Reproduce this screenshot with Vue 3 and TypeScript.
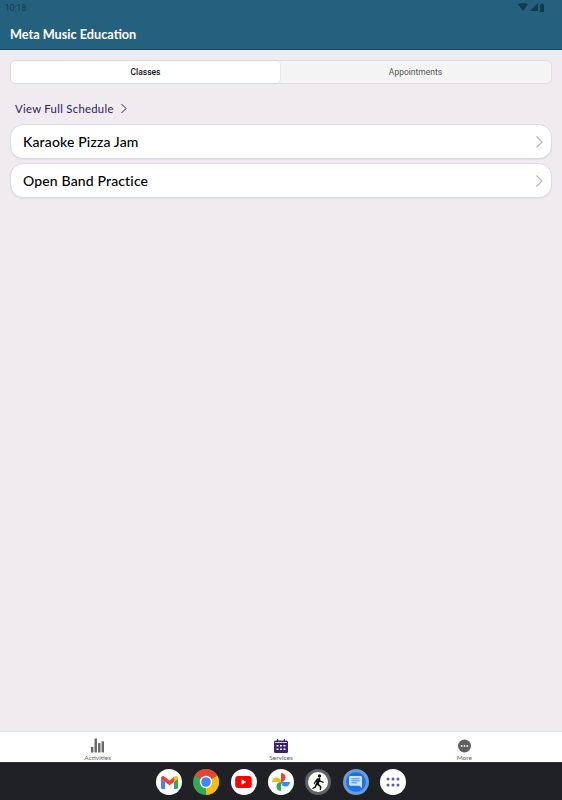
<template>
  <div class="screen">
    <header class="top">
      <div class="status">
        <span class="time">10:18</span>
        <div class="status-icons">
          <svg width="10" height="8" viewBox="0 0 10 8"><path d="M0 1.200C3 -.4 7 -.4 10 1.200L5 8Z" fill="#16394d" /></svg>
          <svg width="8" height="8" viewBox="0 0 8 8"><path d="M8 0V8H0Z" fill="#16394d" /></svg>
          <svg width="6" height="9" viewBox="0 0 6 9"><path d="M1 1.500h1V.5h2v1h1v7.500H1Z" fill="#16394d" /></svg>
        </div>
      </div>
      <h1 class="title">Meta Music Education</h1>
    </header>

    <main class="content">
      <div class="segment">
        <button
          v-for="tab in tabs"
          :key="tab"
          class="segment-btn"
          :class="{ active: tab === activeTab }"
          @click="activeTab = tab"
        >
          {{ tab }}
        </button>
      </div>

      <a class="schedule-link">
        View Full Schedule
        <svg width="8" height="11" viewBox="0 0 8 11"><path d="M1.500 1l4.500 4.500L1.500 10" fill="none" stroke="#2b1a5e" stroke-width="1" /></svg>
      </a>

      <div class="list">
        <div v-for="item in classes" :key="item" class="card">
          <span>{{ item }}</span>
          <svg width="9" height="14" viewBox="0 0 9 14"><path d="M1.500 1.500L7 7l-5.500 5.500" fill="none" stroke="#b5b5b8" stroke-width="1.200" /></svg>
        </div>
      </div>
    </main>

    <nav class="tabbar">
      <div class="tabbar-item">
        <svg width="13" height="15" viewBox="0 0 14 15" fill="#666">
          <rect x="0" y="9" width="2.600" height="6" />
          <rect x="3.800" y="0" width="2.600" height="15" />
          <rect x="7.600" y="5" width="2.600" height="10" />
          <rect x="11.400" y="3" width="2.600" height="12" />
        </svg>
        <span>Activities</span>
      </div>
      <div class="tabbar-item selected">
        <svg width="14" height="14" viewBox="0 0 14 14">
          <rect x="0" y="1.500" width="14" height="12.500" rx="1.500" fill="#3b2270" />
          <rect x="3" y="0" width="1.200" height="3" fill="#3b2270" />
          <rect x="9.800" y="0" width="1.200" height="3" fill="#3b2270" />
          <rect x="1" y="3" width="12" height="1" fill="#cfc8e0" />
          <g fill="#fff">
            <rect x="2.500" y="6" width="2" height="1.500" />
            <rect x="6" y="6" width="2" height="1.500" />
            <rect x="9.500" y="6" width="2" height="1.500" />
            <rect x="2.500" y="9.500" width="2" height="1.500" />
            <rect x="6" y="9.500" width="2" height="1.500" />
            <rect x="9.500" y="9.500" width="2" height="1.500" />
          </g>
        </svg>
        <span>Services</span>
      </div>
      <div class="tabbar-item">
        <svg width="13" height="14" viewBox="0 0 13 13">
          <circle cx="6.500" cy="6.500" r="6.500" fill="#5f5f62" />
          <circle cx="3.700" cy="6.500" r="1" fill="#e8e8e8" />
          <circle cx="6.500" cy="6.500" r="1" fill="#e8e8e8" />
          <circle cx="9.300" cy="6.500" r="1" fill="#e8e8e8" />
        </svg>
        <span>More</span>
      </div>
    </nav>

    <footer class="dock">
      <div class="app white">
        <svg width="17" height="13" viewBox="0 0 17 13">
          <path d="M0 2v9.500A1.500 1.500 0 0 0 1.500 13H4V6Z" fill="#4285f4" />
          <path d="M17 2v9.500a1.500 1.500 0 0 1-1.500 1.500H13V6Z" fill="#34a853" />
          <path d="M0 2C0 .3 2 -.6 3.300 .4L8.500 4.500 13 1v5L8.500 9.300 4 6 0 3Z" fill="#ea4335" />
          <path d="M13 1l.700-.6C15 -.6 17 .3 17 2v1l-4 3Z" fill="#fbbc04" />
        </svg>
      </div>
      <div class="app">
        <svg width="26" height="26" viewBox="0 0 26 26">
          <circle cx="13" cy="13" r="13" fill="#34a853" />
          <path d="M13 13L24.260 6.500A13 13 0 0 1 13 26Z" fill="#fbbc04" />
          <path d="M13 13L1.740 6.500A13 13 0 0 1 24.260 6.500Z" fill="#ea4335" />
          <circle cx="13" cy="13" r="6.200" fill="#fff" />
          <circle cx="13" cy="13" r="4.800" fill="#4285f4" />
        </svg>
      </div>
      <div class="app white">
        <svg width="17" height="12" viewBox="0 0 18 13">
          <rect width="18" height="13" rx="3.500" fill="#f00" />
          <path d="M7 3.500v6L12 6.500Z" fill="#fff" />
        </svg>
      </div>
      <div class="app white">
        <svg width="18" height="18" viewBox="0 0 18 18">
          <path d="M9 9H0A4.500 4.500 0 0 1 9 9Z" fill="#fbbc04" />
          <path d="M9 9V0A4.500 4.500 0 0 1 9 9Z" fill="#ea4335" />
          <path d="M9 9H18A4.500 4.500 0 0 1 9 9Z" fill="#4285f4" />
          <path d="M9 9V18A4.500 4.500 0 0 1 9 9Z" fill="#34a853" />
        </svg>
      </div>
      <div class="app runner">
        <svg width="13" height="16" viewBox="0 0 13 16">
          <circle cx="7.500" cy="2" r="1.700" fill="#111" />
          <path d="M5 4.500L8 4 8.500 6.500 12 8 11.500 9 7.500 7.800 7 10 9.500 12.500 9 16 7.800 16 7.800 13 5 11 3.500 14 .5 15 .3 14 2.500 12.800 4.500 8 3.500 8.500 2.500 10.500 1.500 10 2.800 7.300Z" fill="#111" />
        </svg>
      </div>
      <div class="app messages">
        <svg width="13" height="12" viewBox="0 0 14 13">
          <path d="M1.500 0h11A1.500 1.500 0 0 1 14 1.500V13l-3-2.500H1.500A1.500 1.500 0 0 1 0 9V1.500A1.500 1.500 0 0 1 1.500 0Z" fill="#d2e3fc" />
          <rect x="2.500" y="2.500" width="9" height="1" fill="#4285f4" />
          <rect x="2.500" y="4.700" width="9" height="1" fill="#4285f4" />
          <rect x="2.500" y="6.900" width="6" height="1" fill="#4285f4" />
        </svg>
      </div>
      <div class="app white">
        <svg width="14" height="10" viewBox="0 0 14 10" fill="#5b5f8f">
          <circle cx="2" cy="2" r="1.500" />
          <circle cx="7" cy="2" r="1.500" />
          <circle cx="12" cy="2" r="1.500" />
          <circle cx="2" cy="8" r="1.500" />
          <circle cx="7" cy="8" r="1.500" />
          <circle cx="12" cy="8" r="1.500" />
        </svg>
      </div>
    </footer>
  </div>
</template>

<script setup lang="ts">
import { ref } from 'vue'

const tabs = ['Classes', 'Appointments']
const activeTab = ref('Classes')
const classes = ['Karaoke Pizza Jam', 'Open Band Practice']
</script>

<style scoped>
.screen {
  width: 562px;
  height: 800px;
  display: flex;
  flex-direction: column;
  overflow: hidden;
  background: #efebef;
  font-family: 'Noto Sans', 'Open Sans', sans-serif;
}

.top {
  height: 50px;
  box-sizing: border-box;
  flex-shrink: 0;
  background: #24617f;
  border-bottom: 1px solid #0f4263;
  padding: 0 16px 0 10px;
}

.status {
  height: 15px;
  display: flex;
  align-items: center;
  justify-content: space-between;
}

.time {
  margin-left: -5px;
  font-family: Roboto, sans-serif;
  font-size: 8.500px;
  color: #16394d;
}

.status-icons {
  display: flex;
  align-items: center;
  gap: 1.500px;
  margin-top: -1px;
  padding-right: 1px;
}

.title {
  margin: 10px 0 0;
  font-family: Lato, sans-serif;
  font-size: 12.700px;
  line-height: 18px;
  font-weight: 700;
  color: #fff;
}

.content {
  flex: 1;
  padding: 10px 10px 0;
}

.segment {
  display: flex;
  height: 24px;
  box-sizing: border-box;
  background: #f4f4f4;
  border: 1px solid #e2e0e2;
  border-radius: 5px;
}

.segment-btn {
  flex: 1;
  padding: 0;
  border: none;
  background: transparent;
  font-family: Roboto, sans-serif;
  font-size: 8.500px;
  color: #555;
}

.segment-btn.active {
  flex: 0 0 269px;
  background: #fff;
  border-radius: 4px;
  color: #111;
  font-weight: 500;
  box-shadow: 0 0 1.500px #bbb;
}

.schedule-link {
  display: flex;
  align-items: center;
  gap: 6px;
  margin: 15px 0 0 5px;
  height: 18px;
  font-family: Lato, sans-serif;
  font-size: 11.300px;
  letter-spacing: 0.300px;
  color: #2b1a5e;
}

.list {
  display: flex;
  flex-direction: column;
  gap: 4px;
  margin-top: 7px;
}

.card {
  height: 35px;
  box-sizing: border-box;
  display: flex;
  align-items: center;
  justify-content: space-between;
  padding: 0 7px 0 12px;
  background: #fff;
  border: 1px solid #dedbde;
  border-radius: 13px;
  box-shadow: 0 1px 1px rgba(0, 0, 0, 0.06);
  font-family: Lato, sans-serif;
  font-size: 14px;
  font-weight: 500;
  letter-spacing: 0.150px;
  color: #000;
}

.tabbar {
  height: 32px;
  flex-shrink: 0;
  box-sizing: border-box;
  display: grid;
  grid-template-columns: 1fr 1fr 1fr;
  padding: 0 6px;
  background: #fff;
  border-top: 1px solid #e2dfe2;
  border-bottom: 1px solid #333;
}

.tabbar-item {
  display: flex;
  flex-direction: column;
  align-items: center;
  justify-content: flex-end;
  gap: 1px;
  font-family: Lato, sans-serif;
  font-size: 6.500px;
  line-height: 8px;
  color: #666;
}

.tabbar-item.selected {
  color: #5a5080;
}

.dock {
  height: 37px;
  box-sizing: border-box;
  padding-top: 1px;
  flex-shrink: 0;
  display: flex;
  align-items: center;
  justify-content: center;
  gap: 11.330px;
  background: #202124;
}

.app {
  width: 26px;
  height: 26px;
  border-radius: 50%;
  display: flex;
  align-items: center;
  justify-content: center;
}

.app.white {
  background: #fff;
}

.app.runner {
  box-sizing: border-box;
  background: #fff;
  border: 3px solid #5f6368;
}

.app.messages {
  box-sizing: border-box;
  background: #1a73e8;
  border: 3px solid #6b9bd8;
}
</style>
